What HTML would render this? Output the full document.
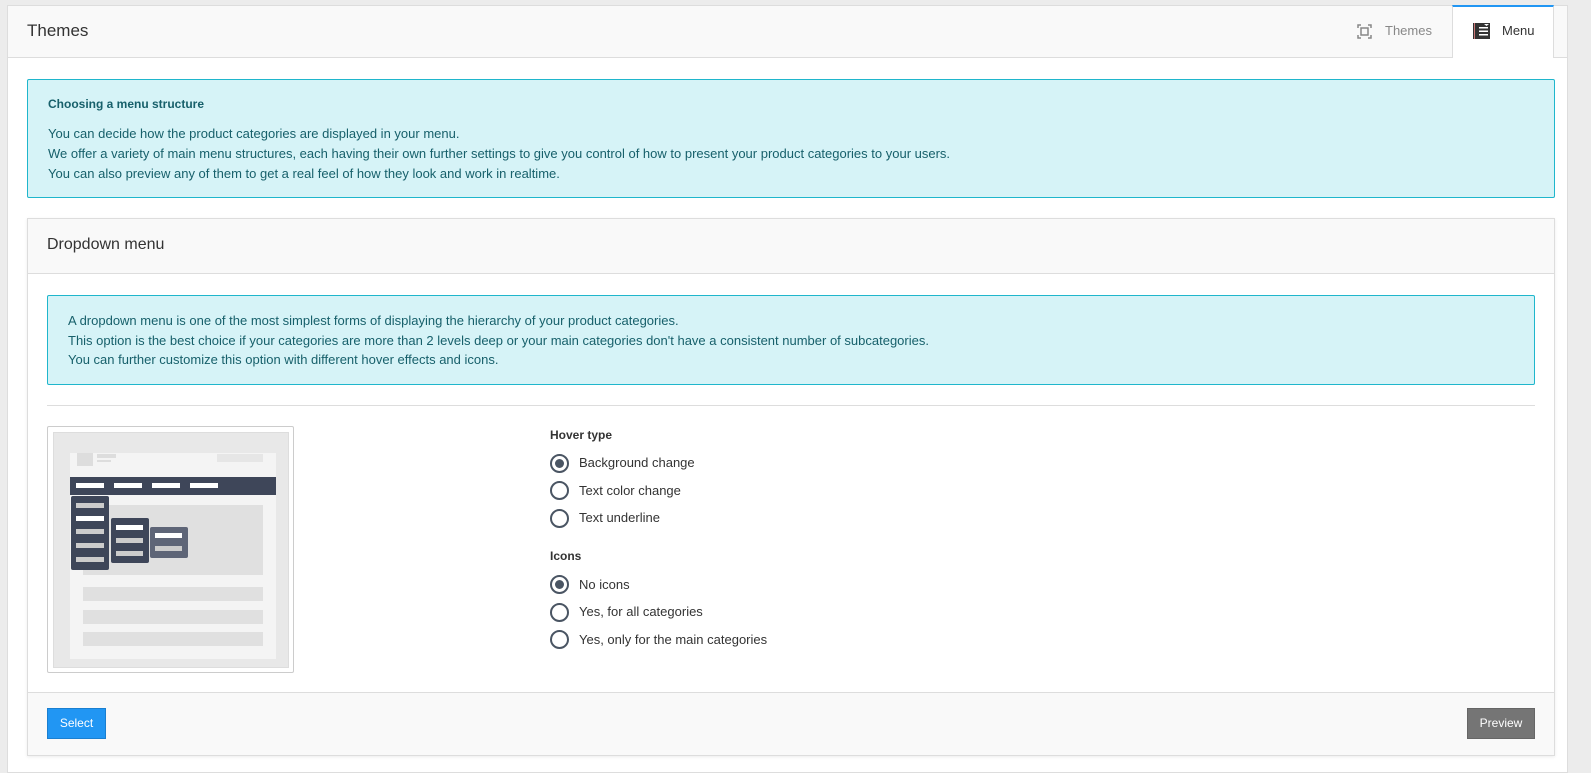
<!DOCTYPE html>
<html><head><meta charset="utf-8"><style>
*{box-sizing:border-box;margin:0;padding:0}
body{width:1591px;height:773px;background:#ececec;font-family:"Liberation Sans",Arial,sans-serif;position:relative;overflow:hidden;color:#333}
.abs{position:absolute}
.panel{left:7px;top:5px;width:1561px;height:768px;background:#fff;border:1px solid #ddd}
.hdr{left:7px;top:5px;width:1561px;height:53px;background:#f9f9f9;border:1px solid #ddd}
.alert{background:#d6f3f7;border:1px solid #1fb6cc;border-radius:2px;color:#17606b;font-size:13px;line-height:20px}
.radio{position:absolute;width:19px;height:19px;border:2px solid #4a5563;border-radius:50%}
.radio.on::after{content:"";position:absolute;left:3px;top:3px;width:9px;height:9px;border-radius:50%;background:#4a5563}
.lbl{position:absolute;font-size:13px;color:#333}
.m{position:absolute}
</style></head><body>
<div class="abs panel"></div>
<div class="abs hdr"></div>
<div class="abs" style="left:27px;top:21px;font-size:17px;color:#333">Themes</div>
<svg class="abs" style="left:1357px;top:24px" width="15" height="15" viewBox="0 0 15 15"><g fill="none" stroke="#888" stroke-width="1.5"><path d="M1 4V1h3M11 1h3v3M14 11v3h-3M4 14H1v-3"/><rect x="4" y="4" width="7" height="7"/></g></svg>
<div class="abs" style="left:1385px;top:23px;font-size:13px;color:#888">Themes</div>
<div class="abs" style="left:1452px;top:5px;width:102px;height:53px;background:#fff;border-top:2px solid #2196f3;border-left:1px solid #ddd;border-right:1px solid #ddd"></div>
<svg class="abs" style="left:1473px;top:23px" width="18" height="17" viewBox="0 0 18 17"><rect x="0" y="0" width="17" height="16" fill="#333"/><rect x="1" y="0" width="1" height="16" fill="#c77"/><g fill="#fff"><rect x="6" y="4" width="9" height="1.5"/><rect x="6" y="7.5" width="9" height="1.5"/><rect x="6" y="11" width="9" height="1.5"/><path d="M11 1h5l-2.5 2z"/></g></svg>
<div class="abs" style="left:1502px;top:23px;font-size:13px;color:#333">Menu</div>

<div class="abs alert" style="left:27px;top:79px;width:1528px;height:119px;padding:14px 20px">
<div style="font-weight:bold;font-size:12px;margin-bottom:10px">Choosing a menu structure</div>
<div>You can decide how the product categories are displayed in your menu.</div>
<div>We offer a variety of main menu structures, each having their own further settings to give you control of how to present your product categories to your users.</div>
<div>You can also preview any of them to get a real feel of how they look and work in realtime.</div>
</div>

<div class="abs" style="left:27px;top:218px;width:1528px;height:538px;border:1px solid #ddd;background:#fff;box-shadow:0 1px 3px rgba(0,0,0,.08)"></div>
<div class="abs" style="left:28px;top:219px;width:1526px;height:55px;background:#f9f9f9;border-bottom:1px solid #ddd"></div>
<div class="abs" style="left:47px;top:236px;font-size:16px;color:#333">Dropdown menu</div>

<div class="abs alert" style="left:47px;top:295px;width:1488px;height:90px;padding:15px 20px 0 20px;line-height:19.5px">
<div>A dropdown menu is one of the most simplest forms of displaying the hierarchy of your product categories.</div>
<div>This option is the best choice if your categories are more than 2 levels deep or your main categories don't have a consistent number of subcategories.</div>
<div>You can further customize this option with different hover effects and icons.</div>
</div>
<div class="abs" style="left:47px;top:405px;width:1488px;height:1px;background:#ddd"></div>

<div class="abs" style="left:47px;top:426px;width:247px;height:247px;border:1px solid #ccc;background:#fff;border-radius:2px"></div>
<div class="abs" style="left:53px;top:432px;width:236px;height:236px;background:#e8e8e8;border:1px solid #ddd"></div>
<div class="abs" style="left:70px;top:453px;width:206px;height:206px;background:#f4f4f4"></div>
<div class="m" style="left:77px;top:453px;width:16px;height:13px;background:#ddd"></div>
<div class="m" style="left:97px;top:454px;width:19px;height:4px;background:#ddd"></div>
<div class="m" style="left:97px;top:460px;width:14px;height:2px;background:#ddd"></div>
<div class="m" style="left:217px;top:454px;width:46px;height:8px;background:#e6e6e6"></div>
<div class="m" style="left:70px;top:477px;width:206px;height:18px;background:#3e4659"></div>
<div class="m" style="left:76px;top:483px;width:28px;height:5px;background:#fff"></div>
<div class="m" style="left:114px;top:483px;width:28px;height:5px;background:#fff"></div>
<div class="m" style="left:152px;top:483px;width:28px;height:5px;background:#fff"></div>
<div class="m" style="left:190px;top:483px;width:28px;height:5px;background:#fff"></div>
<div class="m" style="left:83px;top:505px;width:180px;height:70px;background:#e0e0e0"></div>
<div class="m" style="left:71px;top:496px;width:38px;height:74px;background:#3e4659;border-radius:2px"></div>
<div class="m" style="left:76px;top:503px;width:28px;height:5px;background:#ccc"></div>
<div class="m" style="left:76px;top:516px;width:28px;height:5px;background:#fff"></div>
<div class="m" style="left:76px;top:529px;width:28px;height:5px;background:#ccc"></div>
<div class="m" style="left:76px;top:543px;width:28px;height:5px;background:#ccc"></div>
<div class="m" style="left:76px;top:557px;width:28px;height:5px;background:#ccc"></div>
<div class="m" style="left:111px;top:518px;width:38px;height:45px;background:#3e4659;border-radius:2px"></div>
<div class="m" style="left:116px;top:525px;width:27px;height:5px;background:#fff"></div>
<div class="m" style="left:116px;top:538px;width:27px;height:5px;background:#ccc"></div>
<div class="m" style="left:116px;top:551px;width:27px;height:5px;background:#ccc"></div>
<div class="m" style="left:150px;top:527px;width:38px;height:31px;background:#5e6577;border-radius:2px"></div>
<div class="m" style="left:155px;top:533px;width:27px;height:5px;background:#fff"></div>
<div class="m" style="left:155px;top:546px;width:27px;height:5px;background:#ccc"></div>
<div class="m" style="left:83px;top:587px;width:180px;height:14px;background:#e0e0e0"></div>
<div class="m" style="left:83px;top:610px;width:180px;height:14px;background:#e0e0e0"></div>
<div class="m" style="left:83px;top:632px;width:180px;height:14px;background:#e0e0e0"></div>

<div class="lbl" style="left:550px;top:428px;font-weight:bold;font-size:12px">Hover type</div>
<div class="radio on" style="left:550px;top:454px"></div><div class="lbl" style="left:579px;top:455px">Background change</div>
<div class="radio" style="left:550px;top:481px"></div><div class="lbl" style="left:579px;top:483px">Text color change</div>
<div class="radio" style="left:550px;top:509px"></div><div class="lbl" style="left:579px;top:510px">Text underline</div>
<div class="lbl" style="left:550px;top:549px;font-weight:bold;font-size:12px">Icons</div>
<div class="radio on" style="left:550px;top:575px"></div><div class="lbl" style="left:579px;top:577px">No icons</div>
<div class="radio" style="left:550px;top:603px"></div><div class="lbl" style="left:579px;top:604px">Yes, for all categories</div>
<div class="radio" style="left:550px;top:630px"></div><div class="lbl" style="left:579px;top:632px">Yes, only for the main categories</div>

<div class="abs" style="left:28px;top:692px;width:1526px;height:63px;background:#f9f9f9;border-top:1px solid #ddd"></div>
<div class="abs" style="left:47px;top:708px;width:59px;height:31px;background:#2196f3;border:1px solid #1a7fd0;color:#fff;font-size:12px;text-align:center;line-height:29px">Select</div>
<div class="abs" style="left:1467px;top:708px;width:68px;height:31px;background:#757575;border:1px solid #666;color:#fff;font-size:12px;text-align:center;line-height:29px">Preview</div>
</body></html>
